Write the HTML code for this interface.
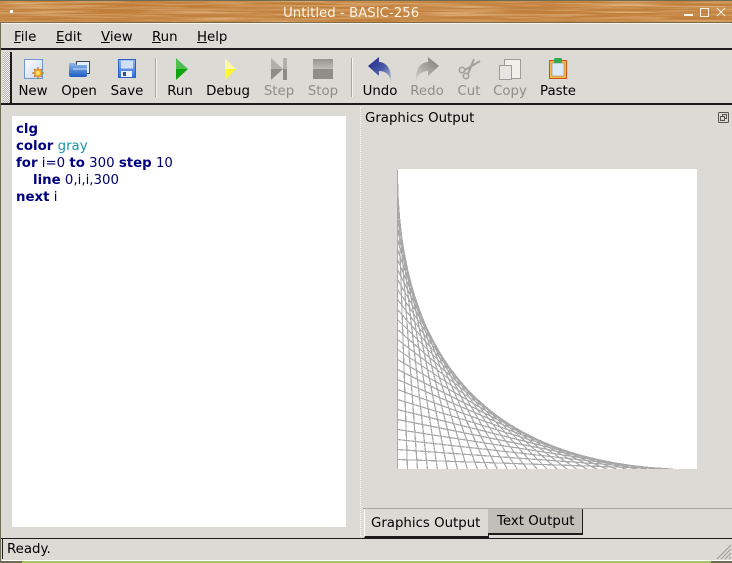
<!DOCTYPE html>
<html><head><meta charset="utf-8"><style>
html,body{margin:0;padding:0;width:732px;height:563px;overflow:hidden;background:#dcdad5}
body{position:relative;font-family:"DejaVu Sans",sans-serif;font-size:13.33px;color:#000}
.a{position:absolute}
.t{position:absolute;white-space:nowrap;line-height:17px}
.l{top:83px;width:60px;text-align:center}
.d{color:#8f8d89}
u{text-decoration:underline}
b{color:#00007f}
svg{position:absolute;overflow:visible}
</style></head><body>
<svg style="left:0;top:0;overflow:hidden" width="732" height="23"><defs><filter id="w" x="0" y="0" width="100%" height="100%"><feTurbulence type="fractalNoise" baseFrequency="0.012 0.55" numOctaves="3" seed="7"/><feColorMatrix values="0 0 0 0 0.90  0 0 0 0 0.66  0 0 0 0 0.38  1.6 0 0 0 -0.65"/></filter></defs><rect width="732" height="23" fill="#c17f3c"/><rect width="732" height="23" filter="url(#w)"/><rect width="732" height="1" fill="#6e6c52"/><rect y="22" width="732" height="1" fill="#7a6a48"/></svg>
<div class="a" style="left:10px;top:10px;width:3px;height:3px;background:#fff"></div>
<div class="t" style="left:283px;top:5px;color:#fbf3e6">Untitled - BASIC-256</div>
<div class="a" style="left:684px;top:14px;width:9px;height:2px;background:#fbf3e6"></div>
<div class="a" style="left:700px;top:8px;width:7px;height:7px;border:1px solid #fbf3e6"></div>
<svg style="left:717px;top:8px" width="9" height="9"><path d="M0 0L8 8M8 0L0 8" stroke="#fbf3e6" fill="none"/></svg>
<div class="a" style="left:0;top:23px;width:1px;height:538px;background:#6e6c52"></div>
<div class="a" style="left:1px;top:23px;width:730px;height:1px;background:#f4f3f0"></div>
<div class="a" style="left:1px;top:48px;width:731px;height:2px;background:#1c1c1c"></div>
<div class="t" style="left:14px;top:29px"><u>F</u>ile</div>
<div class="t" style="left:56px;top:29px"><u>E</u>dit</div>
<div class="t" style="left:101px;top:29px"><u>V</u>iew</div>
<div class="t" style="left:152px;top:29px"><u>R</u>un</div>
<div class="t" style="left:197px;top:29px"><u>H</u>elp</div>
<div class="a" style="left:3px;top:52px;width:7px;height:51px;background:repeating-conic-gradient(#f4f3f0 0 25%,#b4b2ad 0 50%) 0 0/2px 2px"></div>
<div class="a" style="left:10px;top:52px;width:2px;height:51px;background:#1c1c1c"></div>
<div class="a" style="left:1px;top:103px;width:731px;height:2px;background:#1c1c1c"></div>
<div class="a" style="left:155px;top:58px;width:1px;height:39px;background:#a8a6a1;box-shadow:1px 0 #f5f4f2"></div>
<div class="a" style="left:351px;top:58px;width:1px;height:39px;background:#a8a6a1;box-shadow:1px 0 #f5f4f2"></div>

<svg style="left:24px;top:59px" width="20" height="22"><defs><linearGradient id="n" x1="0" y1="0" x2="1" y2="1"><stop offset="0" stop-color="#fff"/><stop offset="1" stop-color="#c5d5ee"/></linearGradient><linearGradient id="b" x1="0" y1="0" x2="0" y2="1"><stop offset="0" stop-color="#8fb8ea"/><stop offset="1" stop-color="#1c5cc0"/></linearGradient><linearGradient id="s" x1="0" y1="0" x2="0" y2="1"><stop offset="0" stop-color="#8db6f0"/><stop offset="1" stop-color="#2f6fd8"/></linearGradient></defs><rect x=".5" y=".5" width="18" height="19" fill="url(#n)" stroke="#6f96d0"/><path d="M14 8l1 3 3-1-1 3 3 1-3 1 1 3-3-1-1 3-1-3-3 1 1-3-3-1 3-1-1-3 3 1z" fill="#f5a81e" stroke="#b5601a" stroke-width=".5"/><circle cx="14" cy="14" r="2" fill="#ffe36a"/></svg>
<svg style="left:69px;top:60px" width="21" height="18"><path d="M7.5 1.5h13v12h-13z" fill="#e8eef7" stroke="#3c4654"/><path d="M0 3h6l2 2h10v10a2 2 0 0 1-2 2H2a2 2 0 0 1-2-2z" fill="url(#b)"/><path d="M4 9h14" stroke="#cfe0f7"/></svg>
<svg style="left:118px;top:59px" width="18" height="20"><rect x=".5" y=".5" width="17" height="18" fill="url(#s)" stroke="#2f5fc0"/><rect x="3" y="1.5" width="12" height="8" fill="#cfe0f8"/><rect x="3" y="12" width="11" height="6" fill="#eef2f8"/><rect x="5" y="13" width="3" height="4" fill="#35507f"/></svg>
<svg style="left:176px;top:58px" width="13" height="22"><path d="M0 0L12 11H0z" fill="#4fc04f"/><path d="M0 11H12L0 22z" fill="#0aa60a"/></svg>
<svg style="left:225px;top:58px" width="11" height="22"><path d="M0 0L11 11H0z" fill="#faf8a8"/><path d="M0 11H11L0 22z" fill="#f8f82c"/></svg>
<svg style="left:271px;top:58px" width="17" height="22"><path d="M0 0L12 11H0z" fill="#b0afaa"/><path d="M0 11H12L0 22z" fill="#8d8c88"/><path d="M12 0h4v11h-4z" fill="#b0afaa"/><path d="M12 11h4v11h-4z" fill="#8d8c88"/></svg>
<svg style="left:313px;top:59px" width="20" height="20"><defs><linearGradient id="p" x1="0" y1="0" x2="0" y2="1"><stop offset="0" stop-color="#969590"/><stop offset="1" stop-color="#bdbcb7"/></linearGradient></defs><rect width="20" height="10" fill="url(#p)"/><rect y="10" width="20" height="10" fill="#8f8e8a"/></svg>
<svg style="left:368px;top:57px" width="25" height="25"><defs><linearGradient id="u" x1="0" y1="0" x2="1" y2="1"><stop offset="0" stop-color="#1f1f88"/><stop offset=".55" stop-color="#4a5aa8"/><stop offset="1" stop-color="#c4c8d2"/></linearGradient><linearGradient id="r" x1="1" y1="0" x2="0" y2="1"><stop offset="0" stop-color="#7a7976"/><stop offset="1" stop-color="#d2d1cc"/></linearGradient></defs><path d="M0 9L11 0V5C18 5 24 12 23 24C21 17 17 14 11 14V19z" fill="url(#u)"/></svg>
<svg style="left:415px;top:57px" width="25" height="25"><path d="M24 9L13 0V5C6 5 0 12 1 24C3 17 7 14 13 14V19z" fill="url(#r)"/></svg>
<svg style="left:458px;top:59px" width="22" height="21" fill="none" stroke="#a2a19d"><path d="M22 2L7 11M16 0L10 15" stroke-width="2"/><circle cx="4" cy="11" r="2.7" stroke-width="1.6"/><circle cx="8" cy="17" r="2.7" stroke-width="1.6"/></svg>
<svg style="left:499px;top:59px" width="22" height="21"><rect x="5.5" y=".5" width="16" height="19" fill="#efefec" stroke="#9c9b97"/><rect x=".5" y="6.5" width="12" height="14" fill="#e6e5e1" stroke="#9c9b97"/></svg>
<svg style="left:549px;top:58px" width="18" height="22"><rect x=".5" y="2.5" width="17" height="18" fill="#f5b94a" stroke="#d0501a"/><rect x="3" y="5" width="12" height="13" fill="#dde8f5" stroke="#8b7a5a" stroke-width=".5"/><rect x="5" y="0" width="8" height="5" rx="1" fill="#32a852"/></svg>

<div class="t l" style="left:3px">New</div>
<div class="t l" style="left:49px">Open</div>
<div class="t l" style="left:97px">Save</div>
<div class="t l" style="left:150px">Run</div>
<div class="t l" style="left:198px">Debug</div>
<div class="t l d" style="left:249px">Step</div>
<div class="t l d" style="left:293px">Stop</div>
<div class="t l" style="left:350px">Undo</div>
<div class="t l d" style="left:397px">Redo</div>
<div class="t l d" style="left:439px">Cut</div>
<div class="t l d" style="left:480px">Copy</div>
<div class="t l" style="left:528px">Paste</div>

<div class="a" style="left:12px;top:116px;width:334px;height:411px;background:#fff"></div>
<div class="t" style="left:16px;top:121px;color:#00006a"><b>clg</b></div>
<div class="t" style="left:16px;top:138px"><b>color</b> <span style="color:#1696a8">gray</span></div>
<div class="t" style="left:16px;top:155px;color:#00006a"><b>for</b> i=0 <b>to</b> 300 <b>step</b> 10</div>
<div class="t" style="left:33px;top:172px;color:#00006a"><b>line</b> 0,i,i,300</div>
<div class="t" style="left:16px;top:189px;color:#00006a"><b>next</b> i</div>

<div class="a" style="left:360px;top:107px;width:1px;height:430px;background:repeating-linear-gradient(#fff 0 1px,#dcdad5 1px 2px)"></div>
<div class="t" style="left:365px;top:110px">Graphics Output</div>
<svg style="left:718px;top:112px" width="12" height="11" fill="none" stroke="#55544f"><rect x=".5" y=".5" width="10" height="10" rx="1"/><rect x="4.5" y="2.5" width="4" height="4"/><rect x="2.5" y="4.5" width="4" height="4" fill="#dcdad5"/></svg>

<div class="a" style="left:397px;top:169px;width:300px;height:300px;background:#fff"></div>
<svg style="left:397px;top:169px;overflow:hidden" width="300" height="300" shape-rendering="crispEdges"><path fill="none" stroke="#a8a8a8" stroke-width="1.2" d="M.5 .5V300.5M.5 10.5L10.5 300.5M.5 20.5L20.5 300.5M.5 30.5L30.5 300.5M.5 40.5L40.5 300.5M.5 50.5L50.5 300.5M.5 60.5L60.5 300.5M.5 70.5L70.5 300.5M.5 80.5L80.5 300.5M.5 90.5L90.5 300.5M.5 100.5L100.5 300.5M.5 110.5L110.5 300.5M.5 120.5L120.5 300.5M.5 130.5L130.5 300.5M.5 140.5L140.5 300.5M.5 150.5L150.5 300.5M.5 160.5L160.5 300.5M.5 170.5L170.5 300.5M.5 180.5L180.5 300.5M.5 190.5L190.5 300.5M.5 200.5L200.5 300.5M.5 210.5L210.5 300.5M.5 220.5L220.5 300.5M.5 230.5L230.5 300.5M.5 240.5L240.5 300.5M.5 250.5L250.5 300.5M.5 260.5L260.5 300.5M.5 270.5L270.5 300.5M.5 280.5L280.5 300.5M.5 290.5L290.5 300.5"/><rect x="276" y="298" width="24" height="2" fill="#fff"/></svg>

<div class="a" style="left:363px;top:508px;width:369px;height:1px;background:#a8a6a1"></div>
<div class="a" style="left:364px;top:509px;width:123px;height:27px;background:#dcdad5;border-left:1px solid #fff;border-bottom:2px solid #1c1c1c;border-right:1px solid #1c1c1c"></div>
<div class="a" style="left:488px;top:509px;width:94px;height:24px;background:#c1bfba;border-bottom:2px solid #1c1c1c;border-right:1px solid #1c1c1c"></div>
<div class="t" style="left:371px;top:515px">Graphics Output</div>
<div class="t" style="left:497px;top:513px">Text Output</div>

<div class="a" style="left:1px;top:538px;width:731px;height:1px;background:#1c1c1c"></div>
<div class="a" style="left:2px;top:539px;width:1px;height:20px;background:#1c1c1c"></div>
<div class="a" style="left:2px;top:560px;width:730px;height:1px;background:#fff"></div>
<div class="t" style="left:7px;top:541px">Ready.</div>
<svg style="left:717px;top:545px" width="14" height="14" fill="none" stroke="#9c9a95"><path d="M14 0L0 14M14 4L4 14M14 8L8 14M14 12L12 14"/></svg>
<div class="a" style="left:0;top:561px;width:732px;height:2px;background:#6e6c52"></div>
<div class="a" style="left:22px;top:561px;width:689px;height:2px;background:#a6c46c"></div>
</body></html>
